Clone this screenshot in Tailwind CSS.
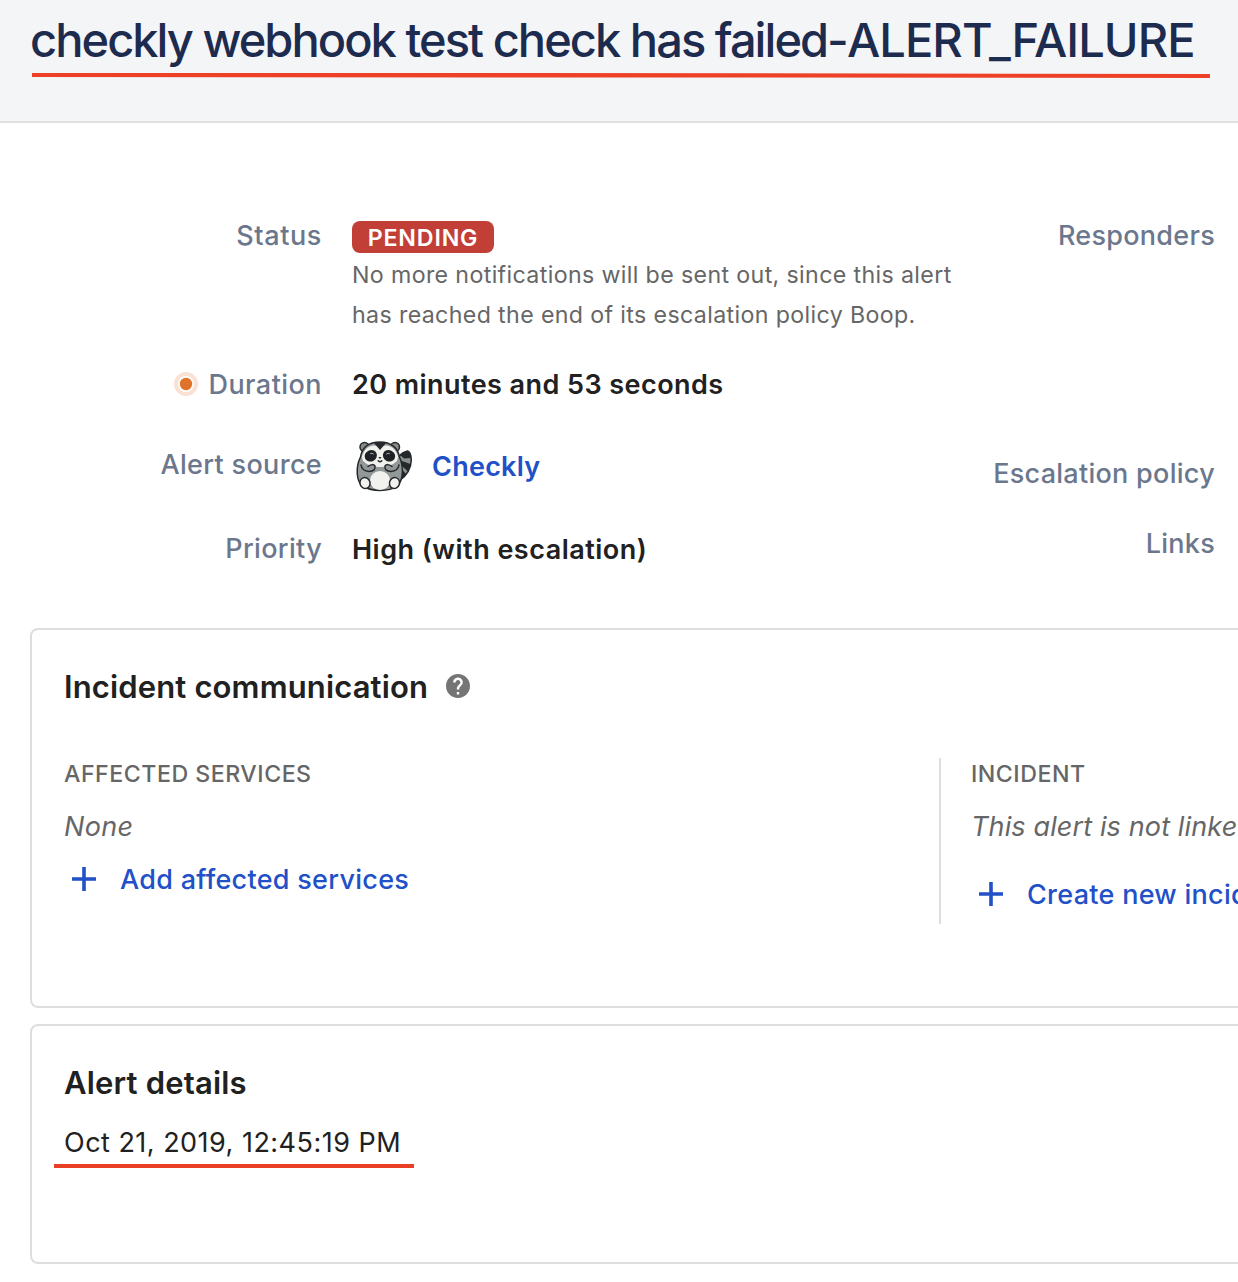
<!DOCTYPE html>
<html lang="en">
<head>
<meta charset="utf-8">
<title>Alert</title>
<script src="https://cdn.jsdelivr.net/npm/@tailwindcss/browser@4"></script>
</head>
<body class="bg-white font-['Inter',sans-serif] text-[27px] leading-10 text-[#212121] overflow-hidden">
<div class="w-[1238px] h-[1282px] overflow-hidden whitespace-nowrap">
  <header class="h-[123px] bg-[#f4f5f7] border-b-2 border-[#dfe0e2] pt-4 pl-[30px]">
    <h1 class="text-[47px] leading-[48px] font-medium tracking-[-1.96px] text-[#1d2b4f]">checkly webhook test check has failed-<span class="tracking-[-0.93px]">ALERT_FAILURE</span></h1>
    <svg class="block mt-2 ml-0.5" width="1178" height="8" viewBox="0 0 1178 8"><path d="M0 1h500L1178 2v4L0 5z" fill="#ee4027"/></svg>
  </header>

  <section class="flex h-[505px] pt-[92px]">
    <div class="w-[322px] shrink-0 pt-px text-right font-medium tracking-[0.33px] text-[#6b778c]">
      <div class="tracking-[0.6px]">Status</div>
      <div class="mt-[109px] flex items-center justify-end gap-[10px]">
        <svg class="-mt-0.5" width="24" height="24" viewBox="0 0 24 24"><circle cx="12" cy="12" r="10" fill="#fff" stroke="#f9e1d4" stroke-width="4"/><circle cx="12" cy="12" r="6.2" fill="#df732b"/></svg>
        <span class="tracking-[0.45px]">Duration</span>
      </div>
      <div class="mt-10">Alert source</div>
      <div class="mt-11">Priority</div>
    </div>
    <div class="w-[610px] shrink-0 pl-[30px] font-semibold">
      <div class="mt-1.5 h-8 w-[142px] rounded-lg bg-[#c23f38] text-center text-[23.2px] leading-[34px] tracking-[0.85px] text-white">PENDING</div>
      <p class="mt-[2px] text-[23.2px] font-normal tracking-[0.36px] text-[#666]">No more notifications will be sent out, since this alert<br>has reached the end of its escalation policy Boop.</p>
      <div class="mt-[30px] tracking-[0.44px]">20 minutes and 53 seconds</div>
      <div class="mt-[33px] flex h-[56px] items-center gap-4 tracking-[0.25px] text-[#2150c8]">
        <svg class="mt-[3px]" width="64" height="56" viewBox="0 0 64 56" stroke="#25282a" stroke-width="1.500" stroke-linejoin="round" stroke-linecap="round">
          <path d="M47 41Q59 33 59.300 20Q59 12 55.500 11Q51 12 47 16Z" fill="#8b9090"/>
          <path d="M55.500 11Q51 12 48 15L52 18.500L59 18Q58.500 12 55.500 11ZM48.500 20.500L58.500 24Q58 28 56 31.500L49 25ZM50 29.500L54.500 34.500Q52 38 48.500 40Z" fill="#25282a" stroke="none"/>
          <circle cx="12.500" cy="7" r="4.500" fill="#858a8a"/><circle cx="43" cy="7" r="4.500" fill="#858a8a"/>
          <path d="M28 2C16 2 10 8 8.500 17C3.500 27 4 42 11 46Q18 50.500 28 50.500Q39 50.500 45 46C52 40 51.500 26 47.500 17C46 8 39 2 28 2Z" fill="#929797"/>
          <path d="M28 7Q20 3 14 9Q8 16 11 21Q17 27 28 27Q39 27 45 21Q48 16 42 9Q36 3 28 7Z" fill="#f1f1ee" stroke="none"/>
          <path d="M22 3Q28 1.500 34 3L28 10Z" fill="#25282a" stroke="none"/>
          <ellipse cx="18.800" cy="15.800" rx="6.300" ry="5.600" transform="rotate(-25 18.800 15.800)" fill="#202326" stroke="none"/><ellipse cx="37" cy="15.800" rx="6.300" ry="5.600" transform="rotate(25 37 15.800)" fill="#202326" stroke="none"/>
          <g fill="none" stroke="#a5a8a8" stroke-width="1"><path d="M18.500 13.500q1.500-1 3 .5M34.500 14q1.500-1.500 3-.5"/></g>
          <path d="M27.300 17.800h1.200M26.200 20.700Q28 22.500 29.800 20.700" fill="none"/>
          <ellipse cx="28" cy="40.500" rx="10" ry="9.500" fill="#f1f1ee" stroke="none"/>
          <path d="M9 25Q10 31 17 31.500Q24 31 23 26Q21 23 16 26.500M47 25Q46 31 39 31.500Q32 31 33 26Q35 23 40 26.500" fill="#929797"/>
          <ellipse cx="13" cy="43" rx="5" ry="5.500" transform="rotate(-20 13 43)" fill="#f1f1ee"/><ellipse cx="42.500" cy="43" rx="5" ry="5.500" transform="rotate(20 42.500 43)" fill="#f1f1ee"/>
        </svg>
        <a class="mt-0.5">Checkly</a>
      </div>
      <div class="mt-[36px] tracking-[0.48px]">High (with escalation)</div>
    </div>
    <div class="w-[283px] shrink-0 pt-px text-right font-medium tracking-[0.28px] text-[#6b778c]">
      <div>Responders</div>
      <div class="mt-[198px]">Escalation policy</div>
      <div class="mt-[30px]">Links</div>
    </div>
  </section>

  <section class="ml-[30px] w-[1300px] h-[380px] rounded-lg border-2 border-[#dedede] pl-8 pt-9">
    <div class="flex items-center gap-[18px]">
      <h2 class="pt-px -mb-px text-[31px] font-semibold tracking-[0.14px]">Incident communication</h2>
      <svg width="24" height="24" viewBox="2 2 20 20" fill="#757575"><path d="M12 2C6.480 2 2 6.480 2 12s4.480 10 10 10 10-4.480 10-10S17.520 2 12 2zm1 17h-2v-2h2v2zm2.070-7.750l-.9.920C13.450 12.900 13 13.500 13 15h-2v-.5c0-1.100.45-2.100 1.170-2.830l1.240-1.260c.37-.36.59-.86.59-1.410 0-1.100-.9-2-2-2s-2 .9-2 2H8c0-2.210 1.790-4 4-4s4 1.790 4 4c0 .88-.36 1.680-.93 2.250z"/></svg>
    </div>
    <div class="mt-[52px] flex h-[166px]">
      <div class="w-[875px] shrink-0">
        <h3 class="-mt-1 text-[23.2px] font-medium tracking-[0.5px] text-[#666]">AFFECTED SERVICES</h3>
        <div class="mt-[13px] italic tracking-[0.3px] text-[#666]">None</div>
        <div class="mt-[13px] flex items-center gap-6 pl-2 font-medium tracking-[0.28px] text-[#2150c8]">
          <svg class="-mt-0.5" width="24" height="24" viewBox="0 0 24 24" stroke="currentColor" stroke-width="3.600"><path d="M0 12h24M12 0v24"/></svg>
          <a>Add affected services</a>
        </div>
      </div>
      <div class="border-l-2 border-[#dedede] pl-[30px]">
        <h3 class="-mt-1 text-[23.2px] font-medium tracking-[0.5px] text-[#666]">INCIDENT</h3>
        <div class="mt-[13px] italic tracking-[0.13px] text-[#666]">This alert is not linke</div>
        <div class="mt-[28px] flex items-center gap-6 pl-2 font-medium tracking-[0.28px] text-[#2150c8]">
          <svg class="-mt-0.5" width="24" height="24" viewBox="0 0 24 24" stroke="currentColor" stroke-width="3.600"><path d="M0 12h24M12 0v24"/></svg>
          <a>Create new incident</a>
        </div>
      </div>
    </div>
  </section>

  <section class="ml-[30px] mt-4 w-[1300px] h-[240px] rounded-lg border-2 border-[#dedede] pl-8 pt-[37px]">
    <h2 class="text-[31px] font-semibold tracking-[0.18px]">Alert details</h2>
    <div class="mt-5 tracking-[0.48px]">Oct 21, 2019, 12:45:19 PM</div>
    <div class="-ml-2.5 mt-px h-1 w-[360px] bg-[#e83f25]"></div>
  </section>
</div>
</body>
</html>
